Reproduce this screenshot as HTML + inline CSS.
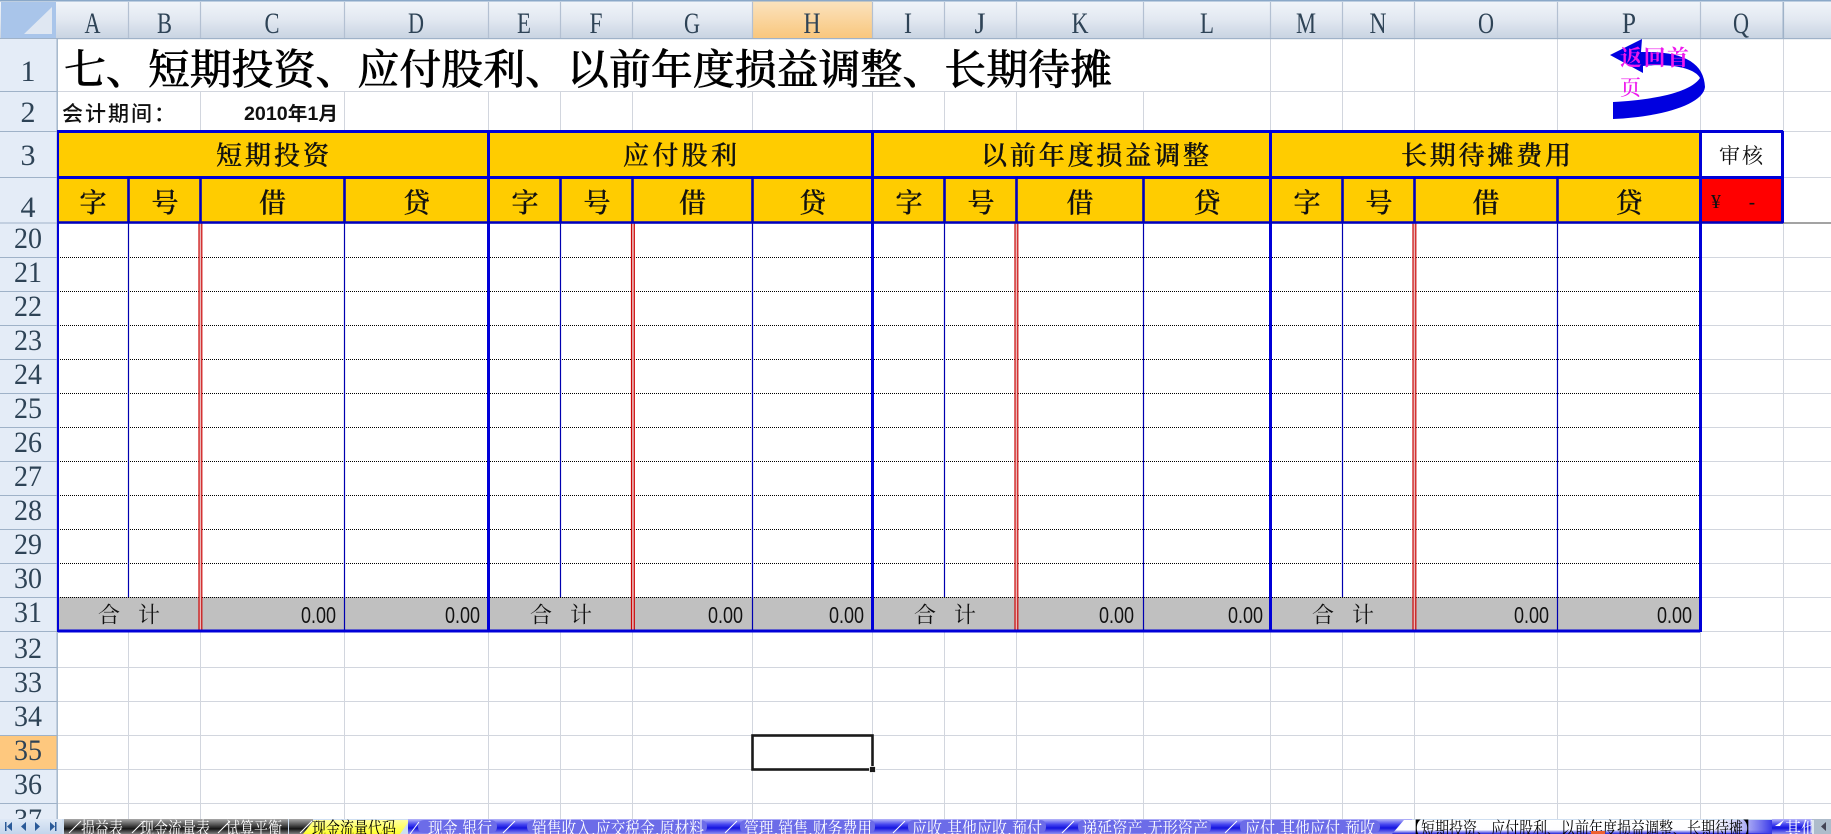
<!DOCTYPE html>
<html><head><meta charset="utf-8"><style>
html,body{margin:0;padding:0;background:#fff;width:1831px;height:834px;overflow:hidden}
svg{display:block}
.h{font-family:"Liberation Serif",serif;font-size:30px;fill:#2e4356;text-anchor:middle}
.c{font-family:"Noto Serif CJK SC","Liberation Serif",serif;fill:#111;text-anchor:middle;dominant-baseline:central}
.t3{font-size:26px;font-weight:500;stroke:#111;stroke-width:.35}
.t4{font-size:27px;font-weight:500;stroke:#111;stroke-width:.3}
.n{font-family:"Liberation Sans",sans-serif;font-size:23px;fill:#111;text-anchor:end}
.he{font-size:22px}
.tb{font-family:"Noto Serif CJK SC","Liberation Sans",serif;font-size:18px;fill:#fff;dominant-baseline:central}
</style></head><body>
<svg width="1831" height="834" viewBox="0 0 1831 834" xmlns="http://www.w3.org/2000/svg">
<defs>
<linearGradient id="hg" x1="0" y1="0" x2="0" y2="1"><stop offset="0" stop-color="#f1f5fa"/><stop offset=".5" stop-color="#e2e8f1"/><stop offset="1" stop-color="#c9d4e2"/></linearGradient>
<linearGradient id="sel" x1="0" y1="0" x2="0" y2="1"><stop offset="0" stop-color="#fae3bf"/><stop offset="1" stop-color="#f9c77d"/></linearGradient>
<linearGradient id="blue" x1="0" y1="0" x2="0" y2="1"><stop offset="0" stop-color="#b8b8f8"/><stop offset=".35" stop-color="#4a4af0"/><stop offset=".6" stop-color="#1414e0"/><stop offset="1" stop-color="#9090f0"/></linearGradient>
<linearGradient id="dark" x1="0" y1="0" x2="0" y2="1"><stop offset="0" stop-color="#a8a8a8"/><stop offset=".4" stop-color="#505050"/><stop offset=".65" stop-color="#151515"/><stop offset="1" stop-color="#808080"/></linearGradient>
<linearGradient id="act" x1="0" y1="0" x2="0" y2="1"><stop offset="0" stop-color="#ffffff"/><stop offset=".7" stop-color="#fdfdff"/><stop offset=".85" stop-color="#8a8af0"/><stop offset="1" stop-color="#2020d8"/></linearGradient>
<linearGradient id="act2" x1="0" y1="0" x2="1" y2="0"><stop offset="0" stop-color="#fff" stop-opacity="0"/><stop offset="1" stop-color="#3838e8"/></linearGradient>
<linearGradient id="yel" x1="0" y1="0" x2="0" y2="1"><stop offset="0" stop-color="#ffffa0"/><stop offset="1" stop-color="#ffff30"/></linearGradient>
<linearGradient id="btn" x1="0" y1="0" x2="0" y2="1"><stop offset="0" stop-color="#dfe9f6"/><stop offset="1" stop-color="#c3d5ec"/></linearGradient>
<clipPath id="tc"><rect x="0" y="819" width="1831" height="15"/></clipPath>
<clipPath id="rc"><rect x="0" y="39" width="57" height="780"/></clipPath>
</defs>
<rect width="1831" height="834" fill="#fff"/>

<!-- grid -->
<path fill="none" stroke="#d2d6de" stroke-width="1" d="M128.5 38V819M200.5 38V819M344.5 38V819M488.5 38V819M560.5 38V819M632.5 38V819M752.5 38V819M872.5 38V819M944.5 38V819M1016.5 38V819M1143.5 38V819M1270.5 38V819M1342.5 38V819M1414.5 38V819M1557.5 38V819M1700.5 38V819M1783.5 38V819M57 91.5H1831M57 131.5H1831M57 177.5H1831M57 257.5H1831M57 291.5H1831M57 325.5H1831M57 359.5H1831M57 393.5H1831M57 427.5H1831M57 461.5H1831M57 495.5H1831M57 529.5H1831M57 563.5H1831M57 597.5H1831M57 631.5H1831M57 667.5H1831M57 701.5H1831M57 735.5H1831M57 769.5H1831M57 803.5H1831"/>
<rect x="58" y="39" width="1212" height="52" fill="#fff"/>
<rect x="58" y="92" width="142" height="38" fill="#fff"/>

<!-- column headers -->
<rect x="0" y="1" width="1831" height="37" fill="url(#hg)"/>
<rect x="752" y="1" width="120" height="37" fill="url(#sel)"/>
<rect x="0" y="0" width="1831" height="1.5" fill="#8aa8c8"/>
<rect x="0" y="38" width="1831" height="1.2" fill="#9fb2c8"/>
<path stroke="#b3c0d2" stroke-width="1.2" d="M128.5 2V38M200.5 2V38M344.5 2V38M488.5 2V38M560.5 2V38M632.5 2V38M752.5 2V38M872.5 2V38M944.5 2V38M1016.5 2V38M1143.5 2V38M1270.5 2V38M1342.5 2V38M1414.5 2V38M1557.5 2V38M1700.5 2V38"/>
<rect x="1782.5" y="2" width="1.6" height="36" fill="#9fb2c8"/>
<rect x="1" y="2" width="55" height="36" fill="#a9c5ea"/>
<path d="M52 7V34H24Z" fill="#dfe7f2"/>
<g class="h">
<text x="92.5" y="33" textLength="16" lengthAdjust="spacingAndGlyphs">A</text>
<text x="164.5" y="33" textLength="15" lengthAdjust="spacingAndGlyphs">B</text>
<text x="272" y="33" textLength="15" lengthAdjust="spacingAndGlyphs">C</text>
<text x="416" y="33" textLength="16" lengthAdjust="spacingAndGlyphs">D</text>
<text x="524" y="33" textLength="14" lengthAdjust="spacingAndGlyphs">E</text>
<text x="596" y="33" textLength="13" lengthAdjust="spacingAndGlyphs">F</text>
<text x="692" y="33" textLength="16" lengthAdjust="spacingAndGlyphs">G</text>
<text x="812" y="33" textLength="17" lengthAdjust="spacingAndGlyphs">H</text>
<text x="908" y="33" textLength="8" lengthAdjust="spacingAndGlyphs">I</text>
<text x="980" y="33" textLength="11" lengthAdjust="spacingAndGlyphs">J</text>
<text x="1080" y="33" textLength="17" lengthAdjust="spacingAndGlyphs">K</text>
<text x="1207" y="33" textLength="14" lengthAdjust="spacingAndGlyphs">L</text>
<text x="1306" y="33" textLength="20" lengthAdjust="spacingAndGlyphs">M</text>
<text x="1378" y="33" textLength="17" lengthAdjust="spacingAndGlyphs">N</text>
<text x="1486" y="33" textLength="16" lengthAdjust="spacingAndGlyphs">O</text>
<text x="1629" y="33" textLength="14" lengthAdjust="spacingAndGlyphs">P</text>
<text x="1741" y="33" textLength="16" lengthAdjust="spacingAndGlyphs">Q</text>
</g>

<!-- row headers -->
<rect x="0" y="39" width="57" height="780" fill="#e4ecf7"/>
<rect x="0" y="736" width="57" height="33" fill="#fec87e"/>
<rect x="56.5" y="39" width="1.4" height="780" fill="#9fb2c8"/>
<path stroke="#9fb2c8" stroke-width="1" fill="none" d="M0 91.5H57M0 131.5H57M0 177.5H57M0 223H57M0 257.5H57M0 291.5H57M0 325.5H57M0 359.5H57M0 393.5H57M0 427.5H57M0 461.5H57M0 495.5H57M0 529.5H57M0 563.5H57M0 597.5H57M0 631.5H57M0 667.5H57M0 701.5H57M0 735.5H57M0 769.5H57M0 803.5H57"/>
<g class="h" clip-path="url(#rc)">
<text x="28" y="81">1</text>
<text x="28" y="122">2</text>
<text x="28" y="165">3</text>
<text x="28" y="217">4</text>
<text x="28" y="248" textLength="28" lengthAdjust="spacingAndGlyphs">20</text>
<text x="28" y="282" textLength="28" lengthAdjust="spacingAndGlyphs">21</text>
<text x="28" y="316" textLength="28" lengthAdjust="spacingAndGlyphs">22</text>
<text x="28" y="350" textLength="28" lengthAdjust="spacingAndGlyphs">23</text>
<text x="28" y="384" textLength="28" lengthAdjust="spacingAndGlyphs">24</text>
<text x="28" y="418" textLength="28" lengthAdjust="spacingAndGlyphs">25</text>
<text x="28" y="452" textLength="28" lengthAdjust="spacingAndGlyphs">26</text>
<text x="28" y="486" textLength="28" lengthAdjust="spacingAndGlyphs">27</text>
<text x="28" y="520" textLength="28" lengthAdjust="spacingAndGlyphs">28</text>
<text x="28" y="554" textLength="28" lengthAdjust="spacingAndGlyphs">29</text>
<text x="28" y="588" textLength="28" lengthAdjust="spacingAndGlyphs">30</text>
<text x="28" y="622" textLength="28" lengthAdjust="spacingAndGlyphs">31</text>
<text x="28" y="658" textLength="28" lengthAdjust="spacingAndGlyphs">32</text>
<text x="28" y="692" textLength="28" lengthAdjust="spacingAndGlyphs">33</text>
<text x="28" y="726" textLength="28" lengthAdjust="spacingAndGlyphs">34</text>
<text x="28" y="760" textLength="28" lengthAdjust="spacingAndGlyphs">35</text>
<text x="28" y="794" textLength="28" lengthAdjust="spacingAndGlyphs">36</text>
<text x="28" y="829" textLength="28" lengthAdjust="spacingAndGlyphs">37</text>
</g>

<!-- title -->
<text class="c" x="64" y="66" style="font-size:41.5px;text-anchor:start;fill:#000;font-weight:500;stroke:#000;stroke-width:.5" textLength="1048" lengthAdjust="spacingAndGlyphs">七、短期投资、应付股利、以前年度损益调整、长期待摊</text>
<text class="c" x="62" y="113" style="font-size:21px;text-anchor:start;font-weight:500;letter-spacing:2px;font-family:'Noto Sans CJK SC',sans-serif">会计期间：</text>
<text x="338" y="120" style="font-family:'Liberation Sans','Noto Sans CJK SC',sans-serif;font-size:19px;font-weight:700;text-anchor:end;fill:#111" textLength="94" lengthAdjust="spacingAndGlyphs">2010年1月</text>

<!-- table fills -->
<rect x="58" y="132" width="1642" height="90" fill="#ffcc00"/>
<rect x="1700" y="178" width="83" height="44" fill="#ff0000"/>
<rect x="1702" y="133" width="80" height="44" fill="#fff"/>
<rect x="58" y="223" width="1642" height="374" fill="#fff"/>
<rect x="58" y="597" width="1642" height="34" fill="#c0c0c0"/>

<!-- dotted row lines -->
<path fill="none" stroke="#000" stroke-width="1" stroke-dasharray="1 1" d="M58 257.5H1700M58 291.5H1700M58 325.5H1700M58 359.5H1700M58 393.5H1700M58 427.5H1700M58 461.5H1700M58 495.5H1700M58 529.5H1700M58 563.5H1700M58 597.5H1700"/>
<!-- thin verticals -->
<path fill="none" stroke="#0000b0" stroke-width="1.2" d="M128.5 223V597M344.5 223V631M560.5 223V597M752.5 223V631M944.5 223V597M1143.5 223V631M1342.5 223V597M1557.5 223V631"/>
<!-- red double -->
<rect x="199.6" y="223" width="1.6" height="408" fill="#e8b8b8"/>
<rect x="632" y="223" width="1.6" height="408" fill="#e8b8b8"/>
<rect x="1015.6" y="223" width="1.6" height="408" fill="#e8b8b8"/>
<rect x="1413.6" y="223" width="1.6" height="408" fill="#e8b8b8"/>
<path fill="none" stroke="#cc0808" stroke-width="1.2" d="M199 223V631M201.8 223V631M631.5 223V631M634.3 223V631M1015 223V631M1017.8 223V631M1413 223V631M1415.8 223V631"/>
<!-- row 4 full line -->
<rect x="57" y="222.4" width="1774" height="1.2" fill="#666"/>
<!-- thick blue -->
<path fill="none" stroke="#0000d8" stroke-width="3" d="M58 131.5H1783M58 177.5H1783M58 631H1700M488.5 131V632M872.5 131V632M1270.5 131V632M1700.5 131V632M1782.5 131V223"/>
<path fill="none" stroke="#0000d8" stroke-width="2" d="M58 130V632"/>
<path fill="none" stroke="#0000c0" stroke-width="2.6" d="M128.5 177V223M200.5 177V223M344.5 177V223M560.5 177V223M632.5 177V223M752.5 177V223M944.5 177V223M1016.5 177V223M1143.5 177V223M1342.5 177V223M1414.5 177V223M1557.5 177V223M58 222.5H1783"/>

<!-- row 3 text -->
<g class="c t3">
<text x="272.5" y="154" textLength="113" lengthAdjust="spacing">短期投资</text>
<text x="680" y="154" textLength="114" lengthAdjust="spacing">应付股利</text>
<text x="1095" y="154" textLength="228" lengthAdjust="spacing">以前年度损益调整</text>
<text x="1486" y="154" textLength="170" lengthAdjust="spacing">长期待摊费用</text>
</g>
<text class="c" x="1741" y="155" style="font-size:21px" textLength="44" lengthAdjust="spacing">审核</text>
<!-- row 4 text -->
<g class="c t4">
<text x="93" y="201">字</text><text x="165" y="201">号</text><text x="272.5" y="201">借</text><text x="416.5" y="201">贷</text>
<text x="525" y="201">字</text><text x="597" y="201">号</text><text x="692.5" y="201">借</text><text x="812.5" y="201">贷</text>
<text x="909" y="201">字</text><text x="981" y="201">号</text><text x="1080" y="201">借</text><text x="1207" y="201">贷</text>
<text x="1307" y="201">字</text><text x="1379" y="201">号</text><text x="1486" y="201">借</text><text x="1629" y="201">贷</text>
</g>
<text x="1716" y="208" style="font-family:'Liberation Serif',serif;font-size:20px;fill:#111;text-anchor:middle">¥</text>
<text x="1752" y="209" style="font-family:'Liberation Sans',sans-serif;font-size:20px;fill:#111;text-anchor:middle">-</text>

<!-- totals -->
<g class="c he">
<text x="109" y="614">合</text><text x="149" y="614">计</text>
<text x="541" y="614">合</text><text x="581" y="614">计</text>
<text x="925" y="614">合</text><text x="965" y="614">计</text>
<text x="1323" y="614">合</text><text x="1363" y="614">计</text>
</g>
<g class="n">
<text x="336" y="623" textLength="35" lengthAdjust="spacingAndGlyphs">0.00</text>
<text x="480" y="623" textLength="35" lengthAdjust="spacingAndGlyphs">0.00</text>
<text x="743" y="623" textLength="35" lengthAdjust="spacingAndGlyphs">0.00</text>
<text x="864" y="623" textLength="35" lengthAdjust="spacingAndGlyphs">0.00</text>
<text x="1134" y="623" textLength="35" lengthAdjust="spacingAndGlyphs">0.00</text>
<text x="1263" y="623" textLength="35" lengthAdjust="spacingAndGlyphs">0.00</text>
<text x="1549" y="623" textLength="35" lengthAdjust="spacingAndGlyphs">0.00</text>
<text x="1692" y="623" textLength="35" lengthAdjust="spacingAndGlyphs">0.00</text>
</g>

<!-- selection -->
<rect x="752.5" y="735.5" width="120" height="34" fill="none" stroke="#1a1a1a" stroke-width="2.6"/>
<rect x="869.5" y="766.5" width="6" height="6" fill="#1a1a1a" stroke="#fff" stroke-width=".8"/>

<!-- arrow -->
<path fill="#0000e0" d="M1610 55L1642 39L1641 52C1682 51 1704 62 1705 87C1703 105 1660 117 1613 119L1613 102C1652 100 1690 93 1700 78C1695 68 1670 63 1643 66L1643 73Z"/>
<text x="1620" y="57" style="font-family:'Noto Serif CJK SC',serif;font-size:22px;fill:#ee18ee;font-weight:700;dominant-baseline:central" textLength="69" lengthAdjust="spacing">返回首</text>
<text x="1620" y="87" style="font-family:'Noto Serif CJK SC',serif;font-size:21px;fill:#ee18ee;font-weight:500;dominant-baseline:central">页</text>

<!-- tab bar -->
<g clip-path="url(#tc)">
<rect x="0" y="819" width="1831" height="15" fill="#cfdff1"/>
<rect x="0" y="819" width="62" height="15" fill="url(#btn)"/>
<path fill="#2a5a98" d="M7 826.5L12 822V831ZM5 822H6.5V831H5ZM21 826.5L26 822V831ZM35 822L40 826.5L35 831ZM50 822L55 826.5L50 831ZM55 822H56.5V831H55Z"/>
<rect x="64" y="819" width="224" height="15" fill="url(#dark)"/>
<rect x="289" y="819" width="24" height="15" fill="url(#dark)"/>
<path d="M303 834L314 820H410L400 834Z" fill="url(#yel)"/>
<rect x="408" y="819" width="1004" height="15" fill="url(#blue)"/>
<path fill="#6c6ce8" d="M425 820H490Q497 820 497 826.5Q497 833 490 833H425Q418 833 418 826.5Q418 820 425 820ZM535 820H700Q707 820 707 826.5Q707 833 700 833H535Q527 833 527 826.5Q527 820 535 820ZM746 820H870Q875 820 875 826.5Q875 833 870 833H746Q740 833 740 826.5Q740 820 746 820ZM914 820H1040Q1046 820 1046 826.5Q1046 833 1040 833H914Q908 833 908 826.5Q908 820 914 820ZM1084 820H1205Q1211 820 1211 826.5Q1211 833 1205 833H1084Q1078 833 1078 826.5Q1078 820 1084 820ZM1246 820H1373Q1380 820 1380 826.5Q1380 833 1373 833H1246Q1240 833 1240 826.5Q1240 820 1246 820Z"/>
<path d="M1392 834L1404 820H1786L1772 834Z" fill="url(#act)"/>
<rect x="1700" y="820" width="72" height="13" fill="url(#act2)"/>
<rect x="1772" y="819" width="48" height="15" fill="url(#blue)"/>
<path fill="#fff" stroke="#fff" stroke-width="1" d="M69 833L81 821M132 833L144 821M218 833L230 821M300 833L312 821M410 834L419 822M503 833L515 821M725 833L737 821M893 833L905 821M1062 833L1074 821M1225 833L1237 821"/>
<path fill="#fff" d="M1775 826L1784 820L1780 826Z"/>
<g class="tb">
<text x="81" y="828" textLength="42" lengthAdjust="spacingAndGlyphs">损益表</text>
<text x="140" y="828" textLength="70" lengthAdjust="spacingAndGlyphs">现金流量表</text>
<text x="226" y="828" textLength="56" lengthAdjust="spacingAndGlyphs">试算平衡</text>
<text x="312" y="828" textLength="84" lengthAdjust="spacingAndGlyphs" style="fill:#000">现金流量代码</text>
<text x="428" y="828" textLength="64" lengthAdjust="spacingAndGlyphs">现金,银行</text>
<text x="532" y="828" textLength="172" lengthAdjust="spacingAndGlyphs">销售收入,应交税金,原材料</text>
<text x="744" y="828" textLength="128" lengthAdjust="spacingAndGlyphs">管理,销售,财务费用</text>
<text x="912" y="828" textLength="130" lengthAdjust="spacingAndGlyphs">应收,其他应收,预付</text>
<text x="1082" y="828" textLength="126" lengthAdjust="spacingAndGlyphs">递延资产,无形资产</text>
<text x="1245" y="828" textLength="130" lengthAdjust="spacingAndGlyphs">应付,其他应付,预收</text>
<text x="1407" y="828" textLength="350" lengthAdjust="spacingAndGlyphs" style="fill:#000">【短期投资、应付股利、以前年度损益调整、长期待摊】</text>
<text x="1785" y="828" textLength="32" lengthAdjust="spacingAndGlyphs">其他</text>
</g>
<rect x="1591" y="831" width="14" height="3" fill="#ee6030"/>
<rect x="1812" y="819" width="19" height="15" fill="#aebccb"/>
<rect x="1812" y="820" width="2" height="14" fill="#dfe7f0"/>
<path fill="#445" d="M1826 822L1821 826.5L1826 831Z"/>
</g>
</svg>
</body></html>
